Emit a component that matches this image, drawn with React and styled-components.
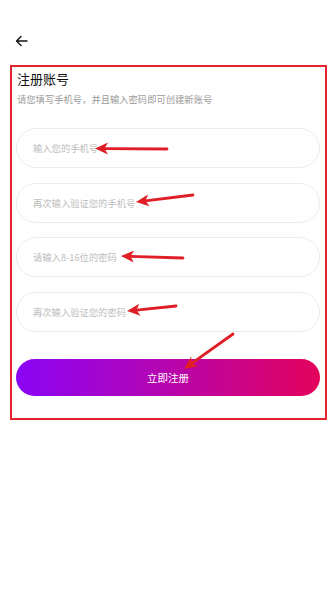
import React from "react";
import styled, { createGlobalStyle } from "styled-components";

const Global = createGlobalStyle`
  html, body { margin: 0; padding: 0; background: #fff; }
  body { font-family: "Noto Sans CJK SC", "Noto Sans", sans-serif; }
  * { box-sizing: border-box; }
`;

const Page = styled.div`
  position: relative;
  width: 336px;
  height: 600px;
  background: #fff;
  overflow: hidden;
`;

const Header = styled.div`
  height: 65px;
  padding: 34px 0 0 14px;
`;

const BackButton = styled.button`
  border: 0;
  background: none;
  padding: 0;
  width: 14px;
  height: 14px;
  display: flex;
  align-items: center;
  justify-content: center;
`;

const Frame = styled.section`
  margin-left: 10px;
  width: 317px;
  height: 355px;
  border: 2px solid #e3262b;
  padding: 3px 5px 0 4px;
  display: flex;
  flex-direction: column;
`;

const Title = styled.h1`
  margin: 0;
  font-size: 13px;
  font-weight: 400;
  line-height: 18px;
  color: #111;
  padding-left: 1px;
`;

const Subtitle = styled.p`
  margin: 5px 0 0;
  font-size: 9.3px;
  line-height: 13px;
  color: #9a9a9a;
  padding-left: 1px;
`;

const Form = styled.div`
  margin-top: 22px;
  display: flex;
  flex-direction: column;
  gap: 14.5px;
`;

const Field = styled.input`
  width: 304px;
  height: 40px;
  border: 1px solid #ececec;
  border-radius: 20px;
  padding: 0 0 0 16px;
  font-family: inherit;
  font-size: 9.3px;
  color: #333;
  outline: none;
  background: #fff;
  &::placeholder { color: #bdbdbd; }
`;

const Submit = styled.button`
  margin-top: 27px;
  width: 304px;
  height: 37px;
  border: 0;
  border-radius: 19px;
  background: linear-gradient(90deg, #8a04f6 0%, #b205b6 45%, #e4035c 100%);
  color: #fff;
  font-family: inherit;
  font-size: 10.5px;
  letter-spacing: 0;
`;

const Overlay = styled.svg`
  position: absolute;
  left: 0;
  top: 0;
  pointer-events: none;
`;

const arrows = [
  { x1: 167, y1: 149, x2: 95, y2: 148.5 },
  { x1: 193, y1: 195, x2: 136, y2: 202 },
  { x1: 183, y1: 258, x2: 121, y2: 256 },
  { x1: 176, y1: 306, x2: 127, y2: 311 },
  { x1: 233, y1: 334, x2: 184, y2: 369 },
];

function Arrow({ x1, y1, x2, y2 }) {
  const dx = x2 - x1;
  const dy = y2 - y1;
  const len = Math.hypot(dx, dy);
  const ux = dx / len;
  const uy = dy / len;
  const hl = 13;
  const hw = 6;
  const bx = x2 - ux * hl;
  const by = y2 - uy * hl;
  const px = -uy;
  const py = ux;
  const pts = `${x2},${y2} ${bx + px * hw},${by + py * hw} ${bx + ux * 3.5},${by + uy * 3.5} ${bx - px * hw},${by - py * hw}`;
  return (
    <g>
      <line x1={x1} y1={y1} x2={bx + ux * 3.5} y2={by + uy * 3.5} stroke="#e01e26" strokeWidth="2.8" strokeLinecap="round" />
      <polygon points={pts} fill="#e01e26" />
    </g>
  );
}

export default function App() {
  return (
    <Page>
      <Global />
      <Header>
        <BackButton aria-label="返回">
          <svg width="13" height="12" viewBox="0 0 13 12" fill="none" stroke="#111" strokeWidth="1.4" strokeLinecap="round" strokeLinejoin="round">
            <path d="M12 6H1.5M6 1.5L1.5 6L6 10.5" />
          </svg>
        </BackButton>
      </Header>
      <Frame>
        <Title>注册账号</Title>
        <Subtitle>请您填写手机号，并且输入密码即可创建新账号</Subtitle>
        <Form>
          <Field placeholder="输入您的手机号" />
          <Field placeholder="再次输入验证您的手机号" />
          <Field placeholder="请输入8-16位的密码" type="password" />
          <Field placeholder="再次输入验证您的密码" type="password" />
        </Form>
        <Submit>立即注册</Submit>
      </Frame>
      <Overlay width="336" height="600" viewBox="0 0 336 600">
        {arrows.map((a, i) => (
          <Arrow key={i} {...a} />
        ))}
      </Overlay>
    </Page>
  );
}
